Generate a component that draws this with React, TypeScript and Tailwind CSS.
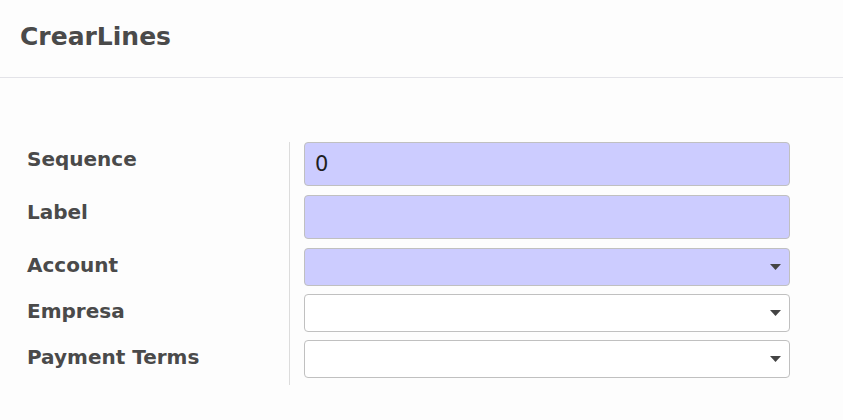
import React from "react";

type Field = {
  label: string;
  value?: string;
  kind: "text" | "select";
  required: boolean;
};

const fields: Field[] = [
  { label: "Sequence", value: "0", kind: "text", required: true },
  { label: "Label", value: "", kind: "text", required: true },
  { label: "Account", kind: "select", required: true },
  { label: "Empresa", kind: "select", required: false },
  { label: "Payment Terms", kind: "select", required: false },
];

function Caret() {
  return (
    <svg width="11" height="6" viewBox="0 0 11 6" className="absolute right-[8px] top-1/2 -translate-y-1/2">
      <path d="M0 0 L11 0 L5.5 6 Z" fill="#444" />
    </svg>
  );
}

function FieldInput({ field }: { field: Field }) {
  const bg = field.required ? "bg-[#ccccff]" : "bg-white";
  if (field.kind === "text") {
    return (
      <div
        className={`h-[44px] w-[486px] rounded-[4px] border border-[#c0c0c0] ${bg} px-[10px] text-[21px] leading-[42px] text-[#1f1f1f]`}
      >
        {field.value}
      </div>
    );
  }
  return (
    <div className={`relative h-[38px] w-[486px] rounded-[4px] border border-[#c0c0c0] ${bg}`}>
      <Caret />
    </div>
  );
}

export default function App() {
  return (
    <div className="min-h-[420px] bg-[#fdfdfd] font-['DejaVu_Sans',sans-serif] text-[#4a4a4a]">
      <div className="h-[78px] border-b border-[#e3e3e8] px-[20px] pt-[22px]">
        <h1 className="text-[25px] leading-[30px] font-bold">CrearLines</h1>
      </div>

      <div className="pl-[27px] pt-[64px]">
        {fields.map((f, i) => {
          const last = i === fields.length - 1;
          const pb = last ? "pb-[7px]" : i < 2 ? "pb-[9px]" : "pb-[8px]";
          return (
            <div key={f.label} className="flex">
              <div className="w-[262px] pt-[5px] text-[20px] leading-[24px] font-bold">{f.label}</div>
              <div className={`border-l border-[#dcdcdc] pl-[14px] ${pb}`}>
                <FieldInput field={f} />
              </div>
            </div>
          );
        })}
      </div>
    </div>
  );
}
